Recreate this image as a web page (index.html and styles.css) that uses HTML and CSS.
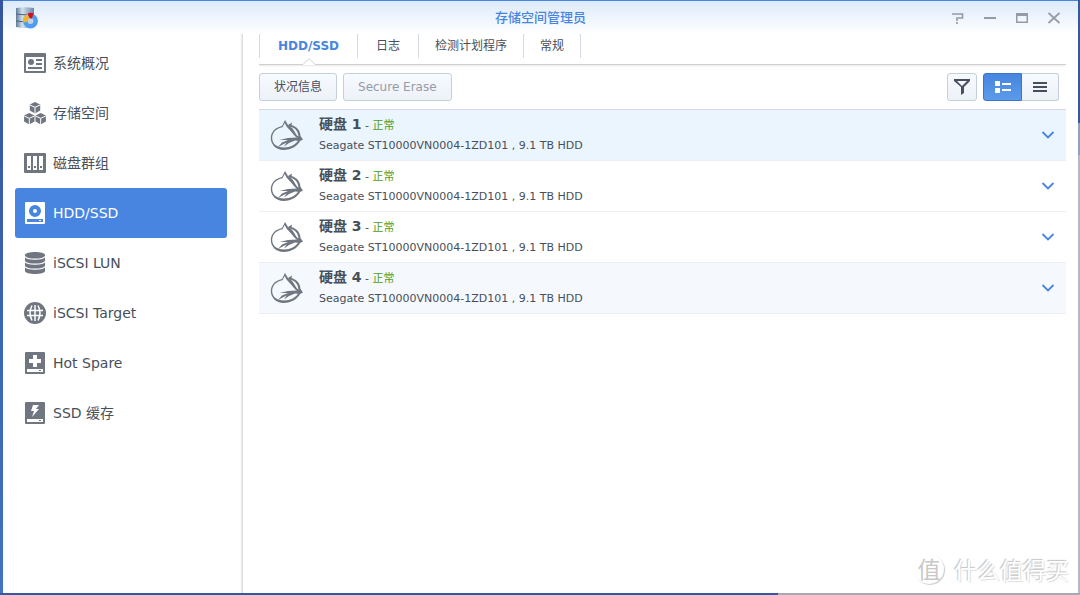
FILE: index.html
```html
<!DOCTYPE html>
<html lang="zh-CN">
<head>
<meta charset="utf-8">
<title>存储空间管理员</title>
<link rel="stylesheet" href="styles.css">
</head>
<body>
<svg class="defs" aria-hidden="true">
  <symbol id="dragon" viewBox="0 0 33 33">
    <g fill="#6f7680">
      <path d="M15 1l-3 6C5 8.500 1 13 .8 19c0 7 5.700 12 12.700 12 8 0 14.500-4.500 17-9.500l-2-.5c-2.500 4.500-8 7.500-14.500 7.500C7 28.500 2.200 25 2.200 19 2.200 13.500 6 9.500 12.500 8.300L14.700 4l1.800 3.500L26 18l2.500 1-6-9.500L18 6z"/>
      <path d="M18 6l4-2.500-.5 2.500C27 7.500 30.500 12 30.500 17l2.500 3.500-3 1.500-5-.5-6 2.500-5 3.500 2.500-4-8.500 4.500 4-4.500 6-2.500H9.500L18 19l9-.5-4.500-4 6 3C28 12 25 9 20.500 7.500l4.500 6z"/>
    </g>
  </symbol>
  <symbol id="chevron" viewBox="0 0 14 8"><path d="M1.500 1 7 6.500 12.500 1" fill="none" stroke="#4785e0" stroke-width="1.800"/></symbol>
</svg>
<div class="window">
  <header class="titlebar">
    <svg class="app-icon" viewBox="0 0 24 22">
      <defs><linearGradient id="cyl"><stop offset="0" stop-color="#5e7c9b"/><stop offset=".35" stop-color="#d3e0ec"/><stop offset="1" stop-color="#6886a6"/></linearGradient></defs>
      <path d="M1 1q9-1.500 18 0v19q-9 2-18 0z" fill="url(#cyl)"/>
      <path d="M1 7q9 1.500 18 0M1 14q9 1.500 18 0" fill="none" stroke="#4a6480" stroke-width="1.200"/>
      <circle cx="15.500" cy="14" r="5.200" fill="#c5d3e0" stroke="#4f9cf2" stroke-width="4.500"/>
      <path d="M10.300 15a5.200 5.200 0 0 1 3.200-5.800" fill="none" stroke="#f5b62d" stroke-width="4.500"/>
      <path d="M12.500 6.500q3-1.500 6 0l-1.500 5h-2z" fill="#cf1027"/>
    </svg>
    <h1 class="title">存储空间管理员</h1>
    <div class="controls">
      <button class="ctl" aria-label="帮助"><svg viewBox="0 0 12 12"><path d="M0 2h10.500v4H5v3M5 10v2" fill="none" stroke="#959ba5" stroke-width="1.600"/></svg></button>
      <button class="ctl" aria-label="最小化"><svg viewBox="0 0 12 12"><path d="M0 5h12v2H0z" fill="#959ba5"/></svg></button>
      <button class="ctl" aria-label="最大化"><svg viewBox="0 0 12 12"><path d="M0 1h12v10H0zM1.500 4v5.500h9V4z" fill="#959ba5" fill-rule="evenodd"/></svg></button>
      <button class="ctl" aria-label="关闭"><svg viewBox="0 0 12 12"><path d="M.5 1l11 10M11.500 1l-11 10" stroke="#959ba5" stroke-width="1.800"/></svg></button>
    </div>
  </header>
  <div class="content">
    <nav class="sidebar">
      <a class="item" href="#"><svg class="ico" viewBox="0 0 22 22"><path fill-rule="evenodd" d="M0 2a1 1 0 0 1 1-1h20a1 1 0 0 1 1 1v18a1 1 0 0 1-1 1H1a1 1 0 0 1-1-1zM2 5v14h18V5z"/><circle cx="7" cy="10" r="3"/><path d="M12 7h6v2h-6zM12 11h6v2h-6zM4 15h14v2H4z"/></svg>系统概况</a>
      <a class="item" href="#"><svg class="ico" viewBox="0 0 22 22"><g id="cube"><path d="m11 0 5.200 2.400v6.200L11 11.500 5.800 8.600V2.400z"/><path d="m6 3 5 2.300L16 3M11 5.300v6" fill="none" stroke="#fff"/></g><use href="#cube" x="-5.700" y="11"/><use href="#cube" x="5.700" y="11"/></svg>存储空间</a>
      <a class="item" href="#"><svg class="ico" viewBox="0 0 22 22"><path fill-rule="evenodd" d="M0 2a1 1 0 0 1 1-1h20a1 1 0 0 1 1 1v18a1 1 0 0 1-1 1H1a1 1 0 0 1-1-1zM3 4v14h4V4zM9 4v14h4V4zM15 4v14h4V4z"/><path d="M4 14h2v2H4zM10 14h2v2h-2zM16 14h2v2h-2z"/></svg>磁盘群组</a>
      <a class="item active" href="#" aria-current="page"><svg class="ico" viewBox="0 0 22 22"><path fill-rule="evenodd" d="M1 1a1 1 0 0 1 1-1h18a1 1 0 0 1 1 1v20a1 1 0 0 1-1 1H2a1 1 0 0 1-1-1zM11 3a6 6 0 1 0 0 12 6 6 0 0 0 0-12zM3 17v3h16v-3z"/><circle cx="11" cy="9" r="2"/><path d="M15 18h2v1h-2z"/></svg>HDD/SSD</a>
      <a class="item" href="#"><svg class="ico" viewBox="0 0 22 22"><path d="M1 3c0-4 20-4 20 0v16c0 4-20 4-20 0z"/><path d="M1 4.500c2 3.500 18 3.500 20 0M1 9.500c2 3.500 18 3.500 20 0M1 14.500c2 3.500 18 3.500 20 0" fill="none" stroke="#fff" stroke-width="1.300"/></svg>iSCSI LUN</a>
      <a class="item" href="#"><svg class="ico" viewBox="0 0 22 22"><circle cx="11" cy="11" r="11"/><path d="M11 3v16M3 8.500h16M3 13.500h16M8 3.500q-4 7.500 0 15M14 3.500q4 7.500 0 15" fill="none" stroke="#fff" stroke-width="1.500"/></svg>iSCSI Target</a>
      <a class="item" href="#"><svg class="ico" viewBox="0 0 22 22"><path fill-rule="evenodd" d="M1 1a1 1 0 0 1 1-1h18a1 1 0 0 1 1 1v20a1 1 0 0 1-1 1H2a1 1 0 0 1-1-1zM9 3v4H5v4h4v4h4v-4h4V7h-4V3zM3 17v3h16v-3z"/><path d="M15 18h2v1h-2z"/></svg>Hot Spare</a>
      <a class="item" href="#"><svg class="ico" viewBox="0 0 22 22"><path fill-rule="evenodd" d="M1 1a1 1 0 0 1 1-1h18a1 1 0 0 1 1 1v20a1 1 0 0 1-1 1H2a1 1 0 0 1-1-1zM9 3 7 9h3l-2 6 7-8h-3l3-4zM3 17v3h16v-3z"/><path d="M15 18h2v1h-2z"/></svg>SSD 缓存</a>
    </nav>
    <main class="main">
      <div class="tabs" role="tablist">
        <button class="tab selected" role="tab" aria-selected="true">HDD/SSD<svg class="pointer" viewBox="0 0 14 8"><path d="M0 8 7 1l7 7z" fill="#fff"/><path d="M0 7.500h1L7 1.500l6 6h1" fill="none" stroke="#cfd0d2"/></svg></button>
        <button class="tab" role="tab">日志</button>
        <button class="tab" role="tab">检测计划程序</button>
        <button class="tab" role="tab">常规</button>
      </div>
      <div class="toolbar">
        <button class="btn">状况信息</button>
        <button class="btn off" disabled>Secure Erase</button>
        <span class="spacer"></span>
        <button class="btn filter" aria-label="筛选"><svg viewBox="0 0 16 16"><path fill="#474f5e" fill-rule="evenodd" d="M0 0h16v2l-6 6v6l-3 2V8L0 2zM3 2l5 5 5-5z"/></svg></button>
        <div class="views">
          <button class="view on" aria-label="详细视图"><svg viewBox="0 0 18 14"><path fill="#fff" d="M1 1h5v5H1zM1 8h5v5H1zM8 3h9v2H8zM8 9h9v2H8z"/></svg></button>
          <button class="view" aria-label="列表视图"><svg viewBox="0 0 18 14"><path fill="#474f5e" d="M2 2h14v2H2zM2 6h14v2H2zM2 10h14v2H2z"/></svg></button>
        </div>
      </div>
      <ul class="disks">
        <li class="disk hover"><svg class="brand"><use href="#dragon"/></svg><div class="info"><p class="line"><strong class="name">硬盘 1</strong> - <span class="ok">正常</span></p><p class="model">Seagate ST10000VN0004-1ZD101 , 9.1 TB HDD</p></div><button class="more" aria-label="展开硬盘 1"><svg><use href="#chevron"/></svg></button></li>
        <li class="disk"><svg class="brand"><use href="#dragon"/></svg><div class="info"><p class="line"><strong class="name">硬盘 2</strong> - <span class="ok">正常</span></p><p class="model">Seagate ST10000VN0004-1ZD101 , 9.1 TB HDD</p></div><button class="more" aria-label="展开硬盘 2"><svg><use href="#chevron"/></svg></button></li>
        <li class="disk"><svg class="brand"><use href="#dragon"/></svg><div class="info"><p class="line"><strong class="name">硬盘 3</strong> - <span class="ok">正常</span></p><p class="model">Seagate ST10000VN0004-1ZD101 , 9.1 TB HDD</p></div><button class="more" aria-label="展开硬盘 3"><svg><use href="#chevron"/></svg></button></li>
        <li class="disk alt"><svg class="brand"><use href="#dragon"/></svg><div class="info"><p class="line"><strong class="name">硬盘 4</strong> - <span class="ok">正常</span></p><p class="model">Seagate ST10000VN0004-1ZD101 , 9.1 TB HDD</p></div><button class="more" aria-label="展开硬盘 4"><svg><use href="#chevron"/></svg></button></li>
      </ul>
    </main>
  </div>
</div>
<div class="watermark"><span class="seal">值</span><span>什么值得买</span></div>
</body>
</html>
```
FILE: styles.css
```css
* { box-sizing: border-box; }

body {
  margin: 0;
  min-height: 100vh;
  padding: 0 2px 2px 3px;
  display: flex;
  background:
    linear-gradient(90deg, #3459a4 72%, #a3aab5 72%) bottom / 100% 2px no-repeat,
    linear-gradient(#3459a4 0 123px, #8fa0c0 123px 155px, #b4bac4 155px) right / 2px 100% no-repeat,
    linear-gradient(#34549d, #4273c4);
  font-family: "DejaVu Sans", "Noto Sans CJK SC", sans-serif;
  color: #474f5b;
}

button { font: inherit; color: inherit; border: 0; background: none; padding: 0; }
svg { display: block; }
.defs { position: absolute; width: 0; height: 0; }

.window {
  flex: 1;
  display: flex;
  flex-direction: column;
  background: #fff;
  border-top: 1px solid #4785e0;
}

.titlebar {
  height: 33px;
  padding: 0 12px;
  display: grid;
  grid-template-columns: 1fr auto 1fr;
  align-items: center;
  background: linear-gradient(#dceafa, #fff);
}
.app-icon { width: 24px; height: 22px; }
.title { margin: 0; font-size: 13px; line-height: 20px; font-weight: 500; color: #4785e0; }
.controls { display: flex; gap: 20px; justify-content: flex-end; padding-right: 6px; }
.ctl svg { width: 12px; height: 12px; }

.content { flex: 1; display: flex; }

.sidebar {
  width: 240px;
  padding: 4px 15px 0 12px;
  border-right: 1px solid #dcdcdc;
  box-shadow: inset -2px 0 2px -1px #e8e8e8;
}
.item {
  display: flex;
  align-items: center;
  gap: 7px;
  height: 50px;
  padding-left: 9px;
  border-radius: 3px;
  font-size: 14px;
  line-height: 20px;
  color: #474f5b;
  text-decoration: none;
}
.item.active { background: #4785e0; color: #fff; }
.ico { width: 22px; height: 22px; fill: #6f7680; }
.active .ico { fill: #fff; }

.main { flex: 1; padding: 0 12px 0 16px; }

.tabs {
  display: flex;
  height: 31px;
  border-bottom: 1px solid #cfd0d2;
  box-shadow: 0 2px 2px -1px #e8e8e8;
}
.tab {
  position: relative;
  height: 24px;
  padding: 0 16px;
  border-right: 1px solid #d5d9e6;
  font-size: 12px;
  line-height: 20px;
}
.tab:first-child { padding: 0 18px; border-left: 1px solid #d5d9e6; }
.tab:nth-child(2) { padding: 0 18px; }
.selected { font-weight: 700; color: #4785e0; }
.pointer { position: absolute; left: 50%; bottom: -7px; width: 14px; height: 8px; margin-left: -7px; }

.toolbar { display: flex; gap: 6px; padding: 8px 7px 8px 0; }
.btn {
  height: 28px;
  padding: 0 14px;
  border: 1px solid #c4cfdb;
  border-radius: 3px;
  background: linear-gradient(#f7faff, #edf2f8);
  font-size: 12px;
  line-height: 20px;
}
.off { color: #959ba5; }
.spacer { flex: 1; }
.filter { width: 30px; padding: 0 6px; }
.filter svg { width: 16px; height: 16px; }
.views { display: flex; }
.view {
  width: 37px;
  height: 28px;
  padding: 0 9px;
  border: 1px solid #c4cfdb;
  border-left: 0;
  border-radius: 0 3px 3px 0;
  background: linear-gradient(#f7faff, #edf2f8);
}
.view svg { width: 18px; height: 14px; }
.view.on {
  width: 39px;
  padding: 0 10px;
  border: 1px solid #3a75cc;
  border-radius: 3px 0 0 3px;
  background: linear-gradient(#4785e0, #5c9bea);
}

.disks { list-style: none; margin: 0; padding: 0; border-top: 1px solid #d3dae6; }
.disk {
  display: flex;
  align-items: center;
  height: 51px;
  padding: 0 11px;
  border-bottom: 1px solid #ebeef2;
}
.hover { background: #eaf5fe; }
.alt { background: #f5f9fe; }
.brand { width: 33px; height: 33px; }
.info { flex: 1; padding-left: 16px; font-size: 11px; }
.line, .model { margin: 0; line-height: 20px; }
.name { font-size: 14px; }
.ok { color: #4f9d17; }
.more svg { width: 14px; height: 8px; }

.watermark {
  position: absolute;
  right: 11px;
  bottom: 10px;
  display: flex;
  align-items: center;
  gap: 10px;
  font-family: "Noto Sans CJK SC", sans-serif;
  font-size: 23px;
  line-height: 32px;
  color: #fff;
  text-shadow: -1px -1px 1px #c4c4c4, 1px 1px 1px #ddd;
}
.seal {
  width: 30px;
  height: 30px;
  border-radius: 50%;
  text-align: center;
  line-height: 28px;
  color: #c8c8c8;
  text-shadow: none;
  box-shadow: 1px 1px 1px #ccc;
}
```
